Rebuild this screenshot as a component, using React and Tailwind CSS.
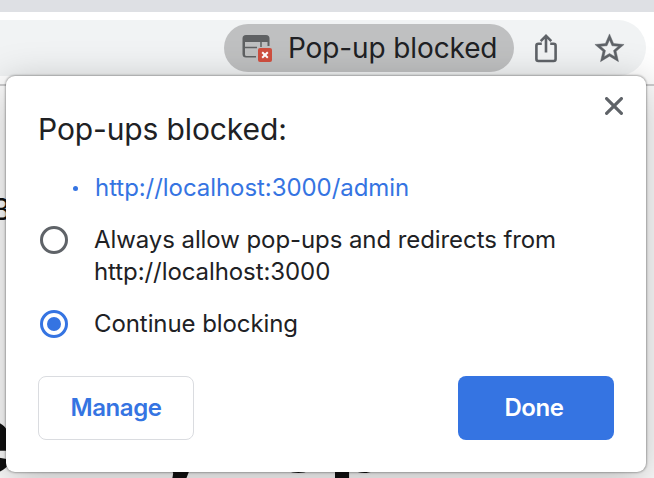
import { useState } from "react";

const options = [
  { id: "allow", lines: ["Always allow pop-ups and redirects from", "http://localhost:3000"] },
  { id: "block", lines: ["Continue blocking"] },
];

const BlockedWindowIcon = () => (
  <svg width="32" height="30" viewBox="0 0 32 30" className="shrink-0">
    <path
      d="M4 2h20a3.500 3.500 0 0 1 3.500 3.500V13h-2V9H3v12.500a1.500 1.500 0 0 0 1.500 1.500H14v1.500H4a3.500 3.500 0 0 1-3.500-3.500V5.500A3.500 3.500 0 0 1 4 2Z"
      fill="#5f6163"
    />
    <path d="M2 14.500h13M19 9v5" stroke="#5f6163" strokeWidth="1.500" />
    <rect x="16" y="15" width="14" height="14" rx="2" fill="#d04f3f" />
    <path d="m20.200 19.200 5.600 5.600m0-5.600-5.600 5.600" stroke="#fff" strokeWidth="2" />
  </svg>
);

const ShareIcon = () => (
  <svg width="24" height="30" viewBox="0 0 24 30" fill="none" stroke="#5f6368" strokeWidth="2.600">
    <path d="M7.800 10.700H4.400a2 2 0 0 0-2 2V26a2 2 0 0 0 2 2H19.600a2 2 0 0 0 2-2V12.700a2 2 0 0 0-2-2H16.200" />
    <path d="M12 19.500V3.500M6.700 8.200 12 2.900l5.300 5.300" />
  </svg>
);

const StarIcon = () => (
  <svg width="35" height="35" viewBox="0 0 24 24" fill="#5f6368" stroke="#5f6368" strokeWidth="0.300">
    <path d="m22 9.240-7.190-.62L12 2 9.190 8.630 2 9.240l5.460 4.730L5.820 21 12 17.270 18.180 21l-1.630-7.030L22 9.240zM12 15.400l-3.760 2.270 1-4.280-3.320-2.880 4.380-.38L12 6.100l1.710 4.040 4.380.38-3.320 2.880 1 4.280L12 15.400z" />
  </svg>
);

const Toolbar = () => (
  <div className="h-[74px] border-b-2 border-[#cfcfd0] bg-white pt-2 pr-2">
    <div className="flex h-14 items-center rounded-r-full bg-[#f1f3f4] pl-[224px]">
      <div className="flex h-12 w-[290px] items-center rounded-full bg-[#bfc0c1] pl-[18px]">
        <BlockedWindowIcon />
        <span className="ml-[14px] whitespace-nowrap text-[28px] leading-8 tracking-[-0.12px] text-[#202124]">
          Pop-up blocked
        </span>
      </div>
      <div className="ml-5 flex w-6 justify-center">
        <ShareIcon />
      </div>
      <div className="ml-[34px]">
        <StarIcon />
      </div>
    </div>
  </div>
);

/* Page content that shows round the edges of the bubble */
const PageBehind = () => (
  <div className="relative flex-1 bg-white text-[#111]">
    <span className="absolute top-[101px] left-[-9px] text-[30px] leading-[44px]">B</span>
    <span className="absolute top-[294px] left-[-42px] text-[96px] leading-[116px] font-bold">e</span>
    <span className="absolute top-[294px] left-[152px] text-[96px] leading-[116px] font-bold">y</span>
    <span className="absolute top-[293px] left-[269px] text-[96px] leading-[116px] font-bold tracking-[1px]">op</span>
  </div>
);

const Radio = ({ checked }) => (
  <span
    className={`flex size-7 shrink-0 items-center justify-center rounded-full border-[3px] ${
      checked ? "border-[#3574e2]" : "border-[#5f6368]"
    }`}
  >
    {checked && <span className="size-[14px] rounded-full bg-[#3574e2]" />}
  </span>
);

const PopupBubble = () => {
  const [selected, setSelected] = useState("block");

  return (
    <div className="absolute top-[76px] left-[6px] flex h-[396px] w-[640px] flex-col rounded-[9px] bg-white px-8 pb-8 text-[#202124] shadow-[0_0_2px_1px_rgba(0,0,0,0.28),0_10px_40px_2px_rgba(0,0,0,0.26)]">
      <button aria-label="Close" className="absolute top-[21px] right-[23px]">
        <svg width="18" height="18" viewBox="0 0 18 18" stroke="#5f6368" strokeWidth="3.200" strokeLinecap="round">
          <path d="m1.600 1.600 14.800 14.800M16.400 1.600 1.600 16.400" />
        </svg>
      </button>

      <h1 className="mt-[33px] text-[30px] leading-10 tracking-[-0.12px]">Pop-ups blocked:</h1>

      <div className="mt-[23px] flex h-8 items-center text-[#3574e2]">
        <span className="ml-[35px] size-[5px] rounded-full bg-[#3574e2]" />
        <a className="ml-[17px] text-[24px] leading-8 tracking-[-0.06px]">http://localhost:3000/admin</a>
      </div>

      <div className="mt-5 flex flex-col gap-5">
        {options.map((o) => (
          <button key={o.id} onClick={() => setSelected(o.id)} className="flex items-start gap-[26px] pl-0.5 text-left">
            <span className="mt-0.5">
              <Radio checked={selected === o.id} />
            </span>
            <span className="text-[24px] leading-8 tracking-[-0.08px] whitespace-nowrap">
              {o.lines.map((line) => (
                <span key={line} className="block">{line}</span>
              ))}
            </span>
          </button>
        ))}
      </div>

      <div className="mt-auto flex justify-between text-[24px] font-semibold tracking-[-0.4px]">
        <button className="h-16 w-[156px] rounded-lg border border-[#dadce0] text-[#3574e2]">Manage</button>
        <button className="h-16 w-[156px] rounded-lg bg-[#3574e2] pr-1 text-white">Done</button>
      </div>
    </div>
  );
};

const App = () => (
  <div className="relative flex h-[478px] w-[654px] flex-col overflow-hidden font-['Inter','Liberation_Sans',sans-serif]">
    <div className="relative z-10 h-3 bg-[#dee0e4]" />
    <Toolbar />
    <PageBehind />
    <PopupBubble />
  </div>
);

export default App;
